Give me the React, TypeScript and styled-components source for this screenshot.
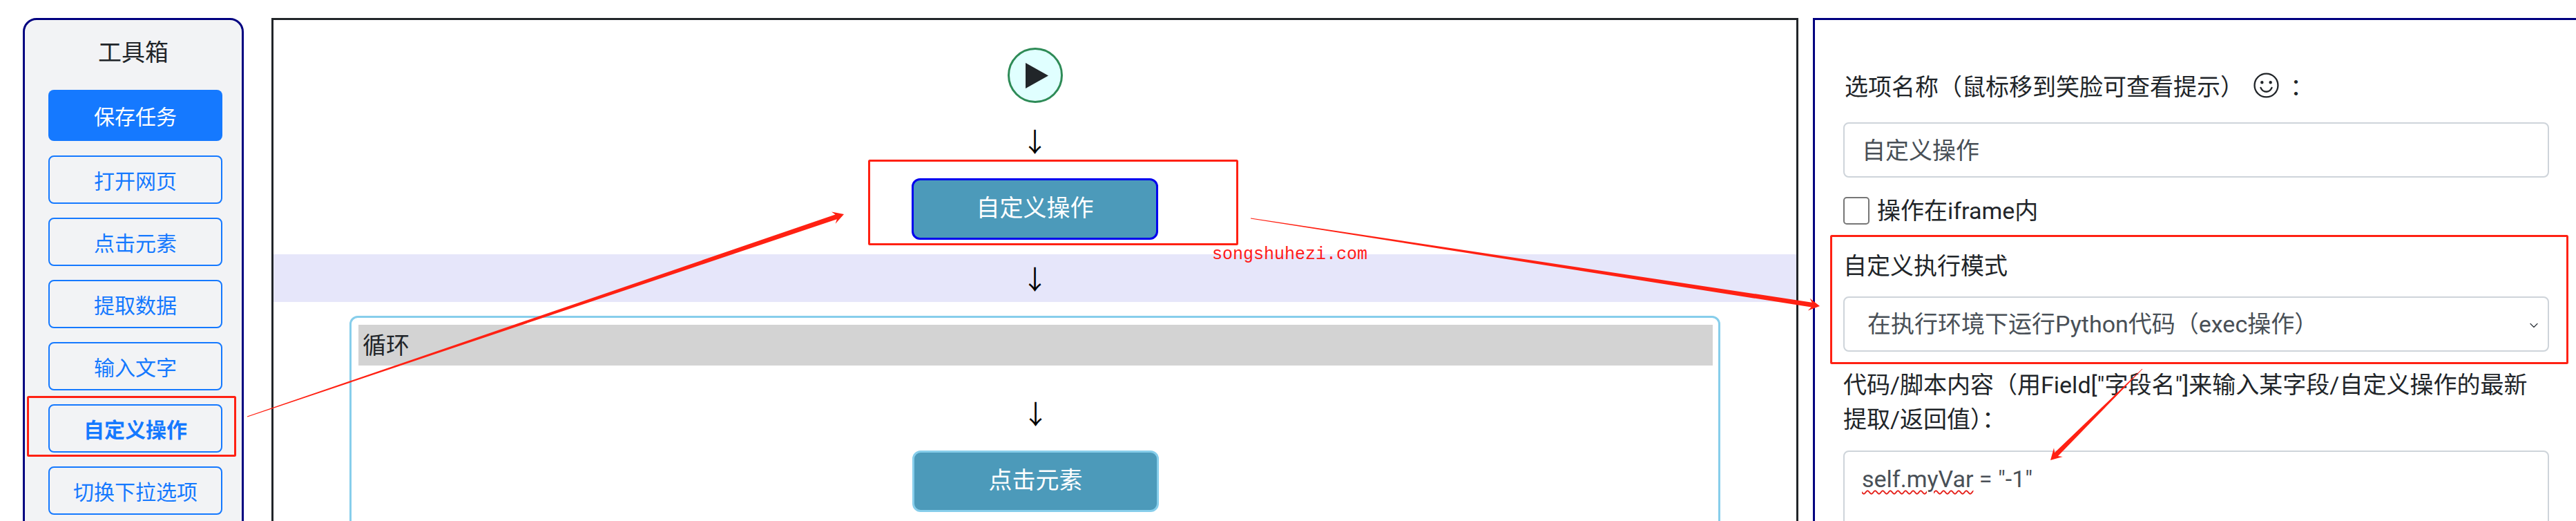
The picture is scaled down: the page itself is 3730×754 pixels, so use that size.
import React from "react";
import styled, { createGlobalStyle } from "styled-components";
import { ChevronDown } from "lucide-react";

const FONT = `Roboto, "Noto Sans CJK SC", sans-serif`;
const RED = "#ff2113";

const GlobalStyle = createGlobalStyle`
  * { box-sizing: border-box; }
  html, body { margin: 0; padding: 0; background: #fff; overflow: hidden; }
  body { font-family: ${FONT}; color: #212529; }
`;

const TOOLS = ["打开网页", "点击元素", "提取数据", "输入文字", "自定义操作", "切换下拉选项"];

// tapered annotation arrow, thin at the start and thick just before the head
function arrowPoints(x0: number, y0: number, x1: number, y1: number, start = 0.6): string {
  const len = Math.hypot(x1 - x0, y1 - y0);
  const ux = (x1 - x0) / len;
  const uy = (y1 - y0) / len;
  const nx = -uy;
  const ny = ux;
  const at = (along: number, side: number) =>
    `${(x1 + ux * along + nx * side).toFixed(1)},${(y1 + uy * along + ny * side).toFixed(1)}`;
  return [
    `${x0 + nx * start},${y0 + ny * start}`,
    at(-12, 3.5),
    at(-16, 9),
    at(0, 0),
    at(-16, -9),
    at(-12, -3.5),
    `${x0 - nx * start},${y0 - ny * start}`,
  ].join(" ");
}

export default function App(): JSX.Element {
  return (
    <Page>
      <GlobalStyle />
      <Sidebar>
        <SidebarTitle>工具箱</SidebarTitle>
        <SaveButton>保存任务</SaveButton>
        <ToolList>
          {TOOLS.map((name) => (
            <ToolButton key={name} $active={name === "自定义操作"}>
              {name}
            </ToolButton>
          ))}
        </ToolList>
      </Sidebar>

      <Canvas>
        <StartNode>
          <svg width="33" height="37" viewBox="0 0 33 37">
            <polygon points="0,0 33,18.5 0,37" fill="#212529" />
          </svg>
        </StartNode>
        <ArrowRow>↓</ArrowRow>
        <FlowNode $selected>自定义操作</FlowNode>
        <DropZone>↓</DropZone>
        <LoopBox>
          <LoopTitle>循环</LoopTitle>
          <LoopArrow>↓</LoopArrow>
          <FlowNode>点击元素</FlowNode>
        </LoopBox>
      </Canvas>

      <Panel>
        <NameLabel>
          选项名称（鼠标移到笑脸可查看提示）
          <Smiley viewBox="0 0 24 24" fill="none" stroke="#212529" strokeWidth="1.5" strokeLinecap="round">
            <circle cx="12" cy="12" r="11" />
            <circle cx="8" cy="9.2" r="0.7" fill="#212529" />
            <circle cx="16" cy="9.2" r="0.7" fill="#212529" />
            <path d="M6.8 14.2c1.2 2.6 3.2 3.8 5.2 3.8s4-1.2 5.2-3.8" />
          </Smiley>
          ：
        </NameLabel>
        <TextBox>自定义操作</TextBox>
        <CheckRow>
          <CheckBox />
          操作在iframe内
        </CheckRow>
        <ModeLabel>自定义执行模式</ModeLabel>
        <SelectBox>
          在执行环境下运行Python代码（exec操作）
          <ChevronDown size={20} strokeWidth={1.5} color="#343a40" />
        </SelectBox>
        <CodeLabel>代码/脚本内容（用Field["字段名"]来输入某字段/自定义操作的最新提取/返回值）：</CodeLabel>
        <CodeBox>
          <Misspelled>self.myVar</Misspelled> = "-1"
        </CodeBox>
      </Panel>

      <Watermark>songshuhezi.com</Watermark>
      <Annotations width="3730" height="754" viewBox="0 0 3730 754">
        <g fill="none" stroke={RED} strokeWidth="3">
          <rect x="40.5" y="574.5" width="300" height="85" rx="1" />
          <rect x="1258.5" y="232.5" width="533" height="121" rx="1" />
          <rect x="2651.5" y="341.5" width="1066" height="184" rx="1" />
        </g>
        <g fill={RED}>
          <polygon points={arrowPoints(358, 603, 1222, 310)} />
          <polygon points={arrowPoints(1811, 316, 2635, 443)} />
          <polygon points={arrowPoints(3102, 534, 2969, 666, 0.4)} />
        </g>
      </Annotations>
    </Page>
  );
}

const Page = styled.div`
  position: relative;
  display: flex;
  align-items: flex-start;
  width: 3730px;
  height: 754px;
  padding-top: 26px;
  overflow: hidden;
`;

const Sidebar = styled.div`
  flex: none;
  width: 320px;
  height: 900px;
  margin-left: 33px;
  padding: 20px 28px 0 34px;
  background: #f2f3f5;
  border: 3px solid #000080;
  border-radius: 20px;
`;

const SidebarTitle = styled.div`
  height: 60px;
  margin-bottom: 21px;
  margin-left: -6px;
  text-align: center;
  font-size: 34px;
  line-height: 54px;
  color: #212529;
`;

const SaveButton = styled.div`
  height: 74px;
  display: flex;
  align-items: center;
  justify-content: center;
  background: #1579ff;
  border-radius: 8px;
  color: #fff;
  font-size: 30px;
  margin-bottom: 21px;
`;

const ToolList = styled.div`
  display: flex;
  flex-direction: column;
  gap: 20px;
`;

const ToolButton = styled.div<{ $active?: boolean }>`
  height: 70px;
  display: flex;
  align-items: center;
  justify-content: center;
  border: 2px solid #1579ff;
  border-radius: 8px;
  color: #1579ff;
  font-size: 30px;
  font-weight: ${(p) => (p.$active ? 700 : 400)};
`;

const Canvas = styled.div`
  flex: none;
  width: 2211px;
  height: 900px;
  margin-left: 40px;
  padding-top: 40px;
  display: flex;
  flex-direction: column;
  align-items: center;
  background: #fff;
  border: 3px solid #212529;
`;

const StartNode = styled.div`
  flex: none;
  width: 80px;
  height: 80px;
  padding-left: 6px;
  display: flex;
  align-items: center;
  justify-content: center;
  background: #e0ffff;
  border: 3px solid #2e8b57;
  border-radius: 50%;
`;

const ArrowRow = styled.div`
  flex: none;
  align-self: stretch;
  height: 69px;
  margin: 20px 0;
  padding-top: 5px;
  display: flex;
  align-items: center;
  justify-content: center;
  font-size: 38px;
  line-height: 1;
  color: #000;
`;

const FlowNode = styled.div<{ $selected?: boolean }>`
  flex: none;
  width: 357px;
  height: 89px;
  padding-bottom: 8px;
  display: flex;
  align-items: center;
  justify-content: center;
  background: #4c9aba;
  border: 3px solid ${(p) => (p.$selected ? "#0000ee" : "#87ceeb")};
  border-radius: 12px;
  color: #fff;
  font-size: 34px;
`;

const DropZone = styled(ArrowRow)`
  margin: 21px 0 20px;
  background: #e6e6fa;
`;

const LoopBox = styled.div`
  flex: none;
  width: 1985px;
  height: 500px;
  padding: 10px 8px 0 10px;
  display: flex;
  flex-direction: column;
  align-items: center;
  border: 3px solid #87ceeb;
  border-radius: 12px;
`;

const LoopTitle = styled.div`
  align-self: stretch;
  height: 59px;
  padding-left: 6px;
  background: #d3d3d3;
  font-size: 34px;
  line-height: 60px;
`;

const LoopArrow = styled(ArrowRow)`
  margin: 34px 0 20px;
`;

const Panel = styled.div`
  flex: none;
  width: 1200px;
  height: 900px;
  margin-left: 21px;
  padding: 69px 0 0 41px;
  background: #fff;
  border: 3px solid #000080;
  font-size: 34px;
  line-height: 50px;
  color: #212529;
`;

const NameLabel = styled.div`
  display: flex;
  align-items: center;
  width: 1022px;
  height: 50px;
  margin-bottom: 29px;
  padding: 6px 0 0 2px;
`;

const Smiley = styled.svg`
  flex: none;
  width: 37px;
  height: 37px;
  margin: -5px 16px 0 14px;
`;

const Field = styled.div`
  width: 1022px;
  background: #fff;
  border: 2px solid #ced4da;
  border-radius: 8px;
  color: #495057;
`;

const TextBox = styled(Field)`
  height: 80px;
  padding: 14px 25px;
`;

const CheckRow = styled.div`
  display: flex;
  align-items: center;
  gap: 11px;
  height: 50px;
  margin-top: 23px;
`;

const CheckBox = styled.div`
  flex: none;
  width: 38px;
  height: 40px;
  background: #fff;
  border: 2px solid #767676;
  border-radius: 5px;
`;

const ModeLabel = styled.div`
  height: 50px;
  margin: 30px 0 19px;
`;

const SelectBox = styled(Field)`
  height: 80px;
  padding: 13px 10px 0 33px;
  display: flex;
  justify-content: space-between;
  align-items: flex-start;

  svg {
    margin-top: 17px;
  }
`;

const CodeLabel = styled.div`
  width: 1022px;
  margin: 23px 0 20px;
`;

const CodeBox = styled(Field)`
  height: 300px;
  padding: 14px 25px;
`;

const Misspelled = styled.span`
  text-decoration: underline wavy #e5201a 2px;
  text-underline-offset: 4px;
`;

const Watermark = styled.div`
  position: absolute;
  left: 1755px;
  top: 354px;
  font-family: "Liberation Mono", monospace;
  font-size: 25px;
  line-height: 30px;
  color: #ff1a1a;
`;

const Annotations = styled.svg`
  position: absolute;
  left: 0;
  top: 0;
  pointer-events: none;
`;
